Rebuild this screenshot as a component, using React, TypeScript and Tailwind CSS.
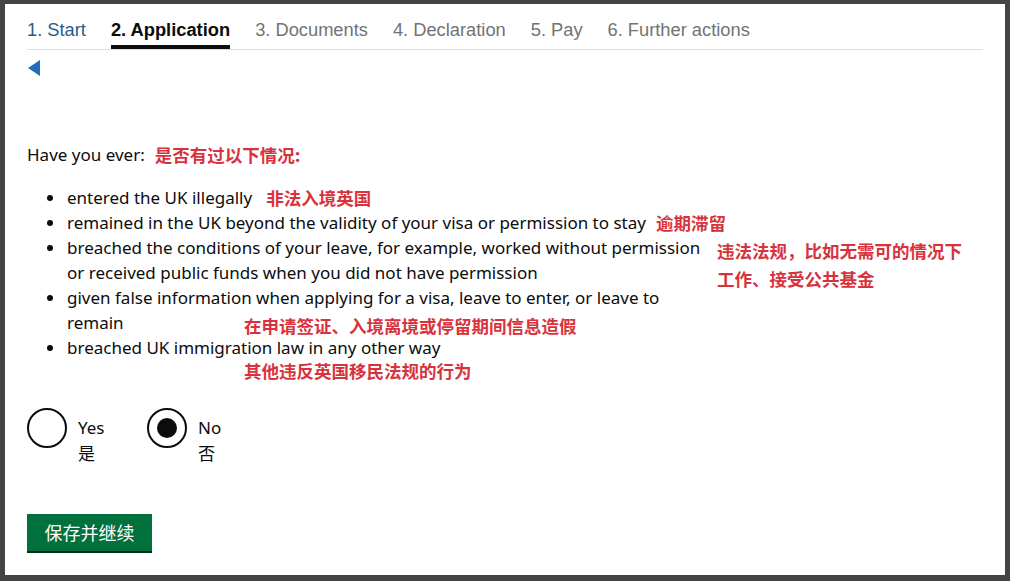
const steps = [
  { label: '1. Start', state: 'done' },
  { label: '2. Application', state: 'current' },
  { label: '3. Documents', state: 'todo' },
  { label: '4. Declaration', state: 'todo' },
  { label: '5. Pay', state: 'todo' },
  { label: '6. Further actions', state: 'todo' },
];

const latin = "font-['Liberation_Sans','Noto_Sans_CJK_SC',sans-serif]";
const body = "font-['Noto_Sans','Noto_Sans_CJK_SC',sans-serif]";
const note =
  "inline-block h-[25px] align-top font-['Noto_Sans_CJK_SC',sans-serif] font-bold text-[17.5px] leading-[25px] text-[#d8333d]";

function Radio({ label, zh, checked }: { label: string; zh: string; checked?: boolean }) {
  return (
    <div className="flex w-[120px] items-start">
      <span className="flex h-[40px] w-[40px] shrink-0 items-center justify-center rounded-full border-2 border-[#0b0c0c]">
        {checked && <span className="h-[20px] w-[20px] rounded-full bg-[#0b0c0c]" />}
      </span>
      <div className="ml-[11px] pt-[7px] text-[17px] leading-[25px] text-[#0b0c0c]">
        <div>{label}</div>
        <div className="font-['Noto_Sans_CJK_SC',sans-serif]">{zh}</div>
      </div>
    </div>
  );
}

function Item({ children }: { children: React.ReactNode }) {
  return (
    <li className="relative flex">
      <span className="flex h-[25px] w-[40px] shrink-0 items-center pl-[20px]">
        <span className="h-[6px] w-[6px] rounded-full bg-[#0b0c0c]" />
      </span>
      {children}
    </li>
  );
}

export default function App() {
  return (
    <div className={`h-[581px] w-[1010px] bg-[#444] pt-[4px] pr-[5px] pb-[6px] pl-[5px] ${latin}`}>
      <div className="h-full bg-white px-[22px]">
        <nav className="flex gap-[25px] border-b border-[#dedede]">
          {steps.map(step => (
            <div
              key={step.label}
              className={
                step.state === 'current'
                  ? 'border-b-4 border-[#0b0c0c] pt-[14px] pb-[3px] text-[18.3px] leading-[24px] font-bold text-[#0b0c0c]'
                  : step.state === 'done'
                    ? 'border-b-4 border-transparent pt-[14px] pb-[3px] text-[18.3px] leading-[24px] text-[#2a5b88]'
                    : 'border-b-4 border-transparent pt-[14px] pb-[3px] text-[18.3px] leading-[24px] text-[#737373]'
              }
            >
              {step.label}
            </div>
          ))}
        </nav>

        <div className="mt-[10px] ml-[1px] h-0 w-0 border-y-[8.5px] border-r-[12px] border-y-transparent border-r-[#1d70b8]" />

        <p className={`mt-[66px] flex h-[25px] items-center text-[17px] leading-[25px] text-[#0b0c0c] ${body}`}>
          Have you ever:
          <span className={`ml-[10px] ${note}`}>是否有过以下情况:</span>
        </p>

        <ul className={`mt-[18px] text-[17px] leading-[25px] text-[#0b0c0c] ${body}`}>
          <Item>
            <span>
              entered the UK illegally
              <span className={`ml-[14px] ${note}`}>非法入境英国</span>
            </span>
          </Item>
          <Item>
            <span>
              remained in the UK beyond the validity of your visa or permission to stay
              <span className={`ml-[10px] ${note}`}>逾期滞留</span>
            </span>
          </Item>
          <Item>
            <span>
              breached the conditions of your leave, for example, worked without permission
              <br />
              or received public funds when you did not have permission
            </span>
            <span className={`absolute top-[2px] left-[690px] h-auto leading-[28px] ${note}`}>
              违法法规，比如无需可的情况下
              <br />
              工作、接受公共基金
            </span>
          </Item>
          <Item>
            <span>
              given false information when applying for a visa, leave to enter, or leave to
              <br />
              remain
            </span>
            <span className={`absolute top-[28px] left-[217px] ${note}`}>
              在申请签证、入境离境或停留期间信息造假
            </span>
          </Item>
          <Item>
            <span>breached UK immigration law in any other way</span>
          </Item>
        </ul>
        <p className={`mt-[-2px] ml-[217px] block ${note}`}>其他违反英国移民法规的行为</p>

        <div className={`mt-[24px] flex ${body}`}>
          <Radio label="Yes" zh="是" />
          <Radio label="No" zh="否" checked />
        </div>

        <button className="mt-[49px] h-[37px] w-[125px] bg-[#00703c] font-['Noto_Sans_CJK_SC',sans-serif] text-[18px] leading-[37px] text-white shadow-[0_2px_0_#002d18]">
          保存并继续
        </button>
      </div>
    </div>
  );
}
